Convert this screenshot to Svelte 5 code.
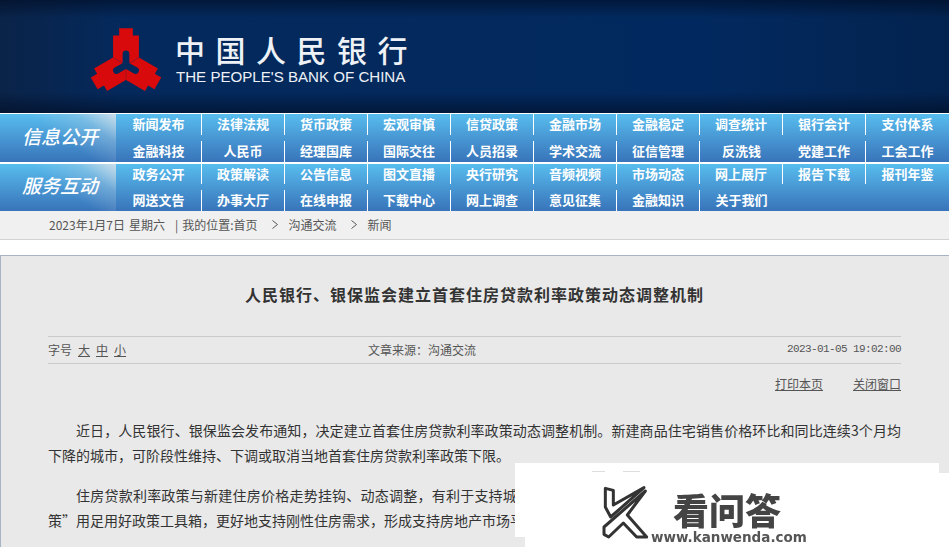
<script>
	const infoLinks = [
		'新闻发布', '法律法规', '货币政策', '宏观审慎', '信贷政策', '金融市场', '金融稳定', '调查统计', '银行会计', '支付体系',
		'金融科技', '人民币', '经理国库', '国际交往', '人员招录', '学术交流', '征信管理', '反洗钱', '党建工作', '工会工作'
	]
	const serviceLinks = [
		'政务公开', '政策解读', '公告信息', '图文直播', '央行研究', '音频视频', '市场动态', '网上展厅', '报告下载', '报刊年鉴',
		'网送文告', '办事大厅', '在线申报', '下载中心', '网上调查', '意见征集', '金融知识', '关于我们'
	]
	const bands = [
		{ label: '信息公开', links: infoLinks },
		{ label: '服务互动', links: serviceLinks }
	]
</script>

<div class="page">
	<header class="banner">
		<svg class="emblem" viewBox="-40 -40 80 80" aria-hidden="true">
			{#each [0, 120, 240] as angle}
				<path
					transform="rotate({angle})"
					d="M-6.5 -35H6.5V-28H12.3V-7.2L3.2 -2V-10.5A3.2 3.2 0 0 0 -3.2 -10.5V-2L-12.3 -7.2V-28H-6.5Z"
				/>
			{/each}
		</svg>
		<div class="brand">
			<div class="brand-cn">中国人民银行</div>
			<div class="brand-en">THE PEOPLE'S BANK OF CHINA</div>
		</div>
	</header>

	<nav>
		{#each bands as band}
			<div class="band">
				<div class="band-label">{band.label}</div>
				<ul class="links">
					{#each band.links as link}
						<li>{link}</li>
					{/each}
				</ul>
			</div>
		{/each}
	</nav>

	<div class="crumbs">
		<span>2023年1月7日</span>
		<span class="week">星期六</span>
		<span class="bar">|</span>
		<span>我的位置:首页</span>
		<svg class="sep" viewBox="0 0 6 9" aria-hidden="true"><path d="M0.5 0.5L5.5 4.5L0.5 8.5" /></svg>
		<span>沟通交流</span>
		<svg class="sep" viewBox="0 0 6 9" aria-hidden="true"><path d="M0.5 0.5L5.5 4.5L0.5 8.5" /></svg>
		<span>新闻</span>
	</div>

	<main class="panel">
		<h1>人民银行、银保监会建立首套住房贷款利率政策动态调整机制</h1>

		<div class="meta">
			<div class="size">
				<span>字号</span>
				<u>大</u>
				<u>中</u>
				<u>小</u>
			</div>
			<div class="source">文章来源：沟通交流</div>
			<div class="stamp">2023-01-05 19:02:00</div>
		</div>

		<div class="tools">
			<u>打印本页</u>
			<u>关闭窗口</u>
		</div>

		<article>
			<p>近日，人民银行、银保监会发布通知，决定建立首套住房贷款利率政策动态调整机制。新建商品住宅销售价格环比和同比连续3个月均下降的城市，可阶段性维持、下调或取消当地首套住房贷款利率政策下限。</p>
			<p>住房贷款利率政策与新建住房价格走势挂钩、动态调整，有利于支持城市政府科学评估当地商品住宅价格变化情况，灵活的“因城施策”用足用好政策工具箱，更好地支持刚性住房需求，形成支持房地产市场平稳健康发展的长效机制。</p>
		</article>
	</main>

	<div class="stamp-mark">
		<i class="smudge one"></i>
		<i class="smudge two"></i>
		<svg class="mark-k" viewBox="60 40 156 180" aria-hidden="true">
			<path d="M76 56L100 62V106L192 54L92 142L76 112Z" />
			<path d="M196 64L72 172V194L86 202L130 160L170 202H200L142 136Z" />
		</svg>
		<div class="mark-cn">看问答</div>
		<div class="mark-url">www.kanwenda.com</div>
	</div>
</div>

<style>
	:global(body) {
		margin: 0;
		overflow: hidden;
		background: #fff;
	}

	.page {
		position: relative;
		width: 949px;
		height: 547px;
		overflow: hidden;
		font-family: 'Noto Sans CJK SC', 'Liberation Sans', sans-serif;
		color: #444;
	}

	.banner {
		display: flex;
		align-items: flex-start;
		box-sizing: border-box;
		height: 113px;
		padding: 23px 0 0 84px;
		background:
			linear-gradient(180deg, rgba(0, 10, 30, 0.55) 0, rgba(0, 10, 30, 0) 18px, rgba(0, 10, 30, 0) 92px, rgba(0, 10, 30, 0.55) 113px),
			linear-gradient(90deg, #0a2348 0, #04295c 120px, #02295f 700px, #03234f 949px);
	}

	.emblem {
		width: 84px;
		height: 84px;
		fill: #d80a0c;
		flex: none;
	}

	.brand {
		margin-left: 8px;
		color: #eef2f6;
	}

	.brand-cn {
		margin: 8px 0 0 -1px;
		font-size: 30px;
		line-height: 36px;
		letter-spacing: 10.5px;
		font-weight: 500;
		white-space: nowrap;
	}

	.brand-en {
		margin-top: 2px;
		font-family: 'Liberation Sans', sans-serif;
		font-size: 15.1px;
		line-height: 16px;
		white-space: nowrap;
	}

	nav {
		padding-top: 1px;
		background: #fff;
	}

	.band {
		display: grid;
		grid-template-columns: 116px 1fr;
		height: 48px;
		background: linear-gradient(180deg, #57bdee 0, #4a9bd6 45%, #3874ba 100%);
	}

	.band + .band {
		height: 47px;
		margin-top: 2px;
	}

	.band-label {
		display: flex;
		align-items: center;
		justify-content: center;
		padding: 0 0 6px 4px;
		color: #fff;
		font-size: 19px;
		font-style: italic;
		font-weight: 500;
		background: linear-gradient(215deg, rgba(222, 226, 232, 0.85) 0, rgba(200, 210, 225, 0.3) 22%, rgba(255, 255, 255, 0) 48%);
	}

	.links {
		display: grid;
		grid-template-columns: 86px repeat(8, 83px) 1fr;
		grid-auto-rows: 21px;
		row-gap: 6px;
		margin: 0;
		padding: 0;
		list-style: none;
		color: #fff;
		font-size: 13px;
		font-weight: 700;
	}

	.band + .band .links {
		grid-template-rows: 20px 21px;
	}

	.links li {
		display: flex;
		align-items: center;
		justify-content: center;
		box-sizing: border-box;
		padding-bottom: 2px;
		border-right: 1px solid #fff;
		white-space: nowrap;
	}

	.links li:nth-child(10n),
	.links li:nth-child(18) {
		border-right: 0;
	}

	.crumbs {
		display: flex;
		align-items: center;
		box-sizing: border-box;
		height: 29px;
		padding: 0 0 2px 49px;
		background: #f0f0f0;
		border-bottom: 1px solid #d2d2d2;
		font-size: 12px;
		color: #555;
		white-space: nowrap;
	}

	.week {
		margin-left: 4px;
	}

	.bar {
		margin: 0 4px 0 10px;
	}

	.sep {
		width: 6px;
		height: 9px;
		margin: 0 11px 0 14px;
		fill: none;
		stroke: #555;
		stroke-width: 1;
	}

	.panel {
		box-sizing: border-box;
		height: 292px;
		margin-top: 15px;
		padding: 27px 48px 0 47px;
		background: #e9e9e9;
		border-top: 1px solid #a9b4c2;
		border-left: 1px solid #a9b4c2;
	}

	h1 {
		margin: 0 0 31px;
		font-size: 16px;
		line-height: 22px;
		letter-spacing: 1px;
		font-weight: 700;
		text-align: center;
		color: #333;
	}

	.meta {
		display: grid;
		grid-template-columns: 320px 1fr auto;
		align-items: center;
		box-sizing: border-box;
		height: 28px;
		padding-bottom: 2px;
		border-top: 1px solid #cacaca;
		border-bottom: 1px solid #cacaca;
		font-size: 12px;
		color: #555;
	}

	.size {
		display: flex;
		gap: 6px;
	}

	.stamp {
		font-family: 'Liberation Mono', monospace;
		font-size: 11px;
		letter-spacing: -0.6px;
	}

	.tools {
		display: flex;
		justify-content: flex-end;
		gap: 30px;
		margin-top: 10px;
		font-size: 12px;
		line-height: 20px;
		color: #555;
	}

	article {
		margin-top: 24px;
		font-size: 14px;
		line-height: 25px;
		color: #333;
	}

	article p {
		margin: 0 0 15px;
		text-indent: 28px;
		text-align: justify;
	}

	.stamp-mark {
		position: absolute;
		left: 515px;
		top: 463px;
		width: 424px;
		height: 74px;
		background: #fff;
		box-shadow: 10px 10px 0 #fff;
	}

	.smudge {
		position: absolute;
		top: 8px;
		height: 1px;
		background: #ddd;
	}

	.one {
		left: 77px;
		width: 13px;
	}

	.two {
		left: 108px;
		width: 17px;
	}

	.mark-k {
		position: absolute;
		left: 85px;
		top: 20px;
		width: 52px;
		height: 60px;
		filter: blur(0.5px);
	}

	.mark-k path {
		fill: #fff;
		stroke: #333;
		stroke-width: 9;
		stroke-linejoin: round;
	}

	.mark-cn {
		position: absolute;
		left: 158px;
		top: 28px;
		font-size: 36px;
		line-height: 36px;
		font-weight: 900;
		color: #444;
		white-space: nowrap;
		filter: blur(0.4px);
	}

	.mark-url {
		position: absolute;
		left: 136px;
		top: 65px;
		font-family: 'DejaVu Sans', sans-serif;
		font-size: 13.5px;
		line-height: 18px;
		font-weight: 700;
		color: #555;
		white-space: nowrap;
		filter: blur(0.4px);
	}
</style>
